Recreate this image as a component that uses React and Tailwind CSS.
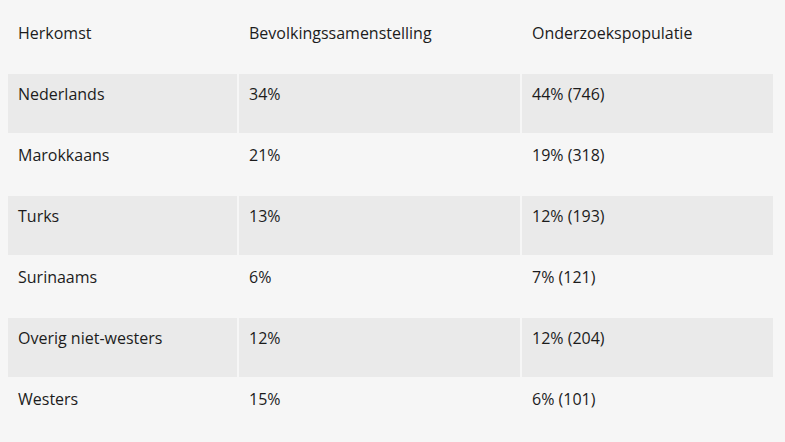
import React from "react";

const rows = [
  ["Nederlands", "34%", "44% (746)"],
  ["Marokkaans", "21%", "19% (318)"],
  ["Turks", "13%", "12% (193)"],
  ["Surinaams", "6%", "7% (121)"],
  ["Overig niet-westers", "12%", "12% (204)"],
  ["Westers", "15%", "6% (101)"],
];

export default function App() {
  return (
    <div
      className="w-[785px] h-[442px] bg-[#f6f6f6] text-[#1c1c1c] pt-[11px] pl-[6px]"
      style={{ fontFamily: '"Open Sans", sans-serif' }}
    >
      <table className="border-separate border-spacing-[2px] text-[16px] leading-[19px] table-fixed w-[769px]">
        <colgroup>
          <col className="w-[229px]" />
          <col className="w-[281px]" />
          <col className="w-[251px]" />
        </colgroup>
        <thead>
          <tr>
            {["Herkomst", "Bevolkingssamenstelling", "Onderzoekspopulatie"].map((h) => (
              <th key={h} className="h-[59px] align-top text-left font-normal pt-[11px] px-[10px]">
                {h}
              </th>
            ))}
          </tr>
        </thead>
        <tbody>
          {rows.map((r, i) => (
            <tr key={r[0]}>
              {r.map((c, j) => (
                <td
                  key={j}
                  className={
                    i % 2 === 0
                      ? "h-[59px] align-top pt-[11px] px-[10px] bg-[#eaeaea]"
                      : "h-[59px] align-top pt-[11px] px-[10px]"
                  }
                >
                  {c}
                </td>
              ))}
            </tr>
          ))}
        </tbody>
      </table>
    </div>
  );
}
